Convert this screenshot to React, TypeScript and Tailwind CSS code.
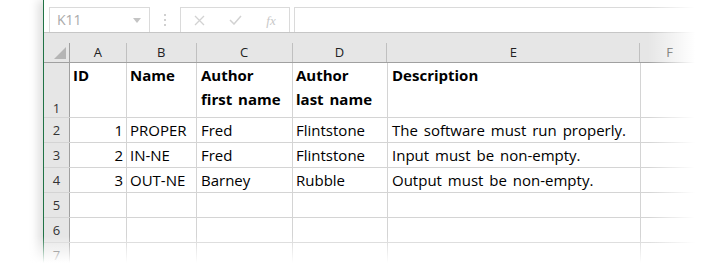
import React from "react";

const cols = [
  { key: "A", w: "w-[57px]" },
  { key: "B", w: "w-[70px]" },
  { key: "C", w: "w-[96px]" },
  { key: "D", w: "w-[95px]" },
  { key: "E", w: "w-[253px]" },
];

type Row = { n: string; cells: string[] };

const rows: Row[] = [
  { n: "2", cells: ["1", "PROPER", "Fred", "Flintstone", "The software must run properly."] },
  { n: "3", cells: ["2", "IN-NE", "Fred", "Flintstone", "Input must be non-empty."] },
  { n: "4", cells: ["3", "OUT-NE", "Barney", "Rubble", "Output must be non-empty."] },
  { n: "5", cells: ["", "", "", "", ""] },
  { n: "6", cells: ["", "", "", "", ""] },
  { n: "7", cells: ["", "", "", "", ""] },
];

const font = { fontFamily: '"Open Sans", "Noto Sans", sans-serif' };

export default function App() {
  return (
    <div className="relative w-[703px] h-[266px] overflow-hidden bg-white pl-[43px]" style={font}>
      <div className="flex flex-col h-full border-l border-[#217346] shadow-[-5px_0_9px_rgba(0,0,0,0.13)] bg-white">
        {/* formula bar */}
        <div className="h-[33px] shrink-0 flex items-end border-b border-[#c6c6c6] bg-white">
          <div className="ml-[5px] w-[101px] h-[25px] border border-b-0 border-[#dadada] flex items-center justify-between pl-[7px] pr-[8px]">
            <span className="text-[14px] text-[#aaaaaa] leading-none">K11</span>
            <svg width="8" height="5" viewBox="0 0 8 5">
              <path d="M0 0 L8 0 L4 5 Z" fill="#c4c4c4" />
            </svg>
          </div>
          <div className="w-[30px] h-[25px] flex flex-col items-center justify-center gap-[3px]">
            <span className="w-[2px] h-[2px] bg-[#d0d0d0]" />
            <span className="w-[2px] h-[2px] bg-[#d0d0d0]" />
            <span className="w-[2px] h-[2px] bg-[#d0d0d0]" />
          </div>
          <div className="w-[110px] h-[25px] border border-b-0 border-[#dadada] flex items-center">
            <div className="w-[36px] flex justify-center">
              <svg width="11" height="11" viewBox="0 0 11 11">
                <path d="M1 1 L10 10 M10 1 L1 10" stroke="#d2d2d2" strokeWidth="1.3" />
              </svg>
            </div>
            <div className="w-[36px] flex justify-center">
              <svg width="13" height="10" viewBox="0 0 13 10">
                <path d="M1 5 L5 9 L12 1" stroke="#d2d2d2" strokeWidth="1.5" fill="none" />
              </svg>
            </div>
            <div className="w-[36px] flex justify-center">
              <span className="text-[13px] italic text-[#c8c8c8] leading-none" style={{ fontFamily: '"Liberation Serif", serif' }}>
                fx
              </span>
            </div>
          </div>
          <div className="ml-[4px] flex-1 h-[25px] border border-b-0 border-r-0 border-[#dadada]" />
        </div>

        {/* column headers */}
        <div className="h-[30px] shrink-0 flex bg-[#e6e6e6] border-b border-[#a0a0a0]">
          <div className="w-[26px] border-r border-[#a0a0a0] mt-[10px] relative">
            <svg className="absolute right-[3px] bottom-[3px]" width="12" height="12" viewBox="0 0 12 12">
              <path d="M12 0 L12 12 L0 12 Z" fill="#b5b5b5" />
            </svg>
          </div>
          {cols.map((c) => (
            <div
              key={c.key}
              className={`${c.w} mt-[10px] border-r border-[#c0c0c0] flex items-center justify-center text-[13px] text-[#222] leading-none`}
            >
              {c.key}
            </div>
          ))}
          <div className="w-[63px] mt-[10px] flex items-center justify-center text-[13px] text-[#222] leading-none pr-[4px]">
            F
          </div>
        </div>

        {/* row 1 */}
        <div className="h-[55px] shrink-0 flex border-b border-[#d4d4d4] [word-spacing:2px]">
          <div className="w-[26px] bg-[#e6e6e6] border-r border-[#a0a0a0] flex items-end justify-center pb-[1px] text-[13px] leading-[16px] text-[#333]">
            1
          </div>
          <div className="w-[57px] border-r border-[#d4d4d4] pl-[3px] font-bold text-[15px] leading-[24px] text-black">ID</div>
          <div className="w-[70px] border-r border-[#d4d4d4] pl-[3px] font-bold text-[15px] leading-[24px] text-black">Name</div>
          <div className="w-[96px] border-r border-[#d4d4d4] pl-[4px] font-bold text-[15px] leading-[24px] text-black">
            <div>Author</div>
            <div>first name</div>
          </div>
          <div className="w-[95px] border-r border-[#d4d4d4] pl-[3px] font-bold text-[15px] leading-[24px] text-black">
            <div>Author</div>
            <div>last name</div>
          </div>
          <div className="w-[253px] border-r border-[#d4d4d4] pl-[4px] font-bold text-[15px] leading-[24px] text-black">
            Description
          </div>
          <div className="flex-1" />
        </div>

        {rows.map((r) => (
          <div key={r.n} className="h-[25px] shrink-0 flex border-b border-[#d4d4d4] [word-spacing:2px]">
            <div className="w-[26px] bg-[#e6e6e6] border-r border-[#a0a0a0] flex items-center justify-center pt-[1px] text-[13px] text-[#333]">
              {r.n}
            </div>
            <div className="w-[57px] border-r border-[#d4d4d4] pr-[3px] text-right text-[15px] leading-[24px] text-black">
              {r.cells[0]}
            </div>
            <div className="w-[70px] border-r border-[#d4d4d4] pl-[3px] text-[15px] leading-[24px] text-black">
              {r.cells[1]}
            </div>
            <div className="w-[96px] border-r border-[#d4d4d4] pl-[4px] text-[15px] leading-[24px] text-black">
              {r.cells[2]}
            </div>
            <div className="w-[95px] border-r border-[#d4d4d4] pl-[3px] text-[15px] leading-[24px] text-black">
              {r.cells[3]}
            </div>
            <div className="w-[253px] border-r border-[#d4d4d4] pl-[4px] text-[15px] leading-[24px] text-black whitespace-nowrap">
              {r.cells[4]}
            </div>
            <div className="flex-1" />
          </div>
        ))}
      </div>

      {/* right fade */}
      <div className="absolute top-0 bottom-0 left-[648px] right-0 bg-linear-to-r from-white/0 to-white to-[85%]" />
      {/* bottom fade */}
      <div className="absolute left-0 right-0 top-[236px] bottom-0 bg-linear-to-b from-white/0 to-white to-[90%]" />
    </div>
  );
}
